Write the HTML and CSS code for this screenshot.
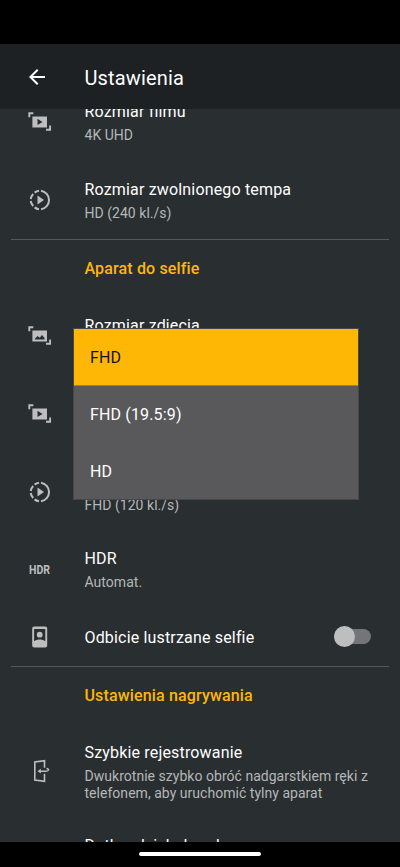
FILE: index.html
```html
<!DOCTYPE html>
<html lang="pl">
<head>
<meta charset="utf-8">
<title>Ustawienia</title>
<link rel="stylesheet" href="styles.css">
</head>
<body>
<svg class="symbols" aria-hidden="true">
  <symbol id="film" viewBox="0 0 24 24"><path d="M1.300 6.200V2.300H5.300M18 18.700h4.100v-4.200" fill="none" stroke="currentColor" stroke-width="1.900"/><path fill-rule="evenodd" d="M4.400 5.500H19V16.400H4.400zM9.500 7.800v6.300l5-3.150z"/></symbol>
  <symbol id="photo" viewBox="0 0 24 24"><path d="M1.300 6.200V2.300H5.300M18 18.700h4.100v-4.200" fill="none" stroke="currentColor" stroke-width="1.900"/><path fill-rule="evenodd" d="M4.400 5.500H19V16.400H4.400zM7 14.500h9.500v-1.500L14 10l-2.300 2.700L9.700 11 7 13.500z"/></symbol>
  <symbol id="slow" viewBox="0 0 24 24"><path d="M13 2.700a9.400 9.400 0 0 1 0 18.600M11 2.700a9.300 9.300 0 0 0-4.400 1.900M5.200 6A9.400 9.400 0 0 0 2.700 11M2.700 13a9.400 9.400 0 0 0 2.500 5M6.600 19.400a9.300 9.300 0 0 0 4.400 1.900" fill="none" stroke="currentColor" stroke-width="2"/><path d="M9.500 7.500v9l6.500-4.500z"/></symbol>
</svg>
<div class="screen">
  <div class="status"></div>
  <header class="bar">
    <svg class="back" viewBox="0 0 24 24"><path d="M20 11H7.830l5.590-5.590L12 4l-8 8 8 8 1.410-1.410L7.830 13H20z"/></svg>
    <h1>Ustawienia</h1>
  </header>
  <main class="list">
    <section class="row film"><svg class="icon"><use href="#film"/></svg><div class="text"><h3>Rozmiar filmu</h3><p>4K UHD</p></div></section>
    <section class="row slow"><svg class="icon"><use href="#slow"/></svg><div class="text"><h3>Rozmiar zwolnionego tempa</h3><p>HD (240 kl./s)</p></div></section>
    <h2>Aparat do selfie</h2>
    <section class="row photo"><svg class="icon"><use href="#photo"/></svg><div class="text"><h3>Rozmiar zdjęcia</h3></div></section>
    <section class="row film-front"><svg class="icon"><use href="#film"/></svg></section>
    <section class="row slow-front"><svg class="icon"><use href="#slow"/></svg><div class="text"><p>FHD (120 kl./s)</p></div></section>
    <section class="row hdr"><span class="icon hdr-icon">HDR</span><div class="text"><h3>HDR</h3><p>Automat.</p></div></section>
    <section class="row mirror"><svg class="icon" viewBox="0 0 24 24"><path fill-rule="evenodd" d="M6.200 1.500h11a2 2 0 0 1 2 2v17a2 2 0 0 1-2 2h-11a2 2 0 0 1-2-2v-17a2 2 0 0 1 2-2zM6.100 4v12.300c3-2.500 8.200-2.500 11.200 0V4z"/><circle cx="11.700" cy="9.700" r="2.900"/></svg><div class="text"><h3>Odbicie lustrzane selfie</h3></div><div class="switch"><span></span></div></section>
    <h2>Ustawienia nagrywania</h2>
    <section class="row quick"><svg class="icon" viewBox="0 0 24 24"><g fill="none" stroke="currentColor" stroke-width="1.600"><path d="M16.500 8.700V1.700L6.800 3v18l9.700 1.300V14.800"/><path d="M11 12.200h6.500c4 0 3.800-2.300 1-2.700" stroke-width="1.400"/></g><path d="M9.500 12.200l3.300-2.400v4.800z"/></svg><div class="text"><h3>Szybkie rejestrowanie</h3><p>Dwukrotnie szybko obróć nadgarstkiem ręki z telefonem, aby uruchomić tylny aparat</p></div></section>
    <section class="row touch"><div class="text"><h3>Dotk. gdziekol. wyk.</h3></div></section>
  </main>
  <footer class="nav"><span></span></footer>
  <div class="menu"><div class="selected">FHD</div><div>FHD (19.5:9)</div><div>HD</div></div>
</div>
</body>
</html>
```
FILE: styles.css
```css
* { box-sizing: border-box; }
body { margin: 0; background: #000; font-family: Roboto, sans-serif; }
h1, h2, h3, p { margin: 0; font-weight: 400; }
.symbols { display: none; }
.screen { position: relative; width: 400px; height: 867px; overflow: hidden; display: flex; flex-direction: column; background: #292e30; }
.status { height: 44px; background: #000; flex: none; }
.bar { height: 65px; flex: none; background: #1d2123; display: flex; align-items: center; padding: 3px 0 0 25px; color: #fff; }
.back { width: 24px; height: 24px; fill: currentColor; margin-right: 35.5px; margin-top: -3px; }
h1 { font-size: 20px; line-height: 24px; letter-spacing: .15px; }
.list { height: 733px; flex: none; overflow: hidden; }
.row { display: flex; height: 78px; padding: 0 28px; }
.icon { flex: none; width: 24px; height: 24px; margin: 27px 32.5px 0 0; color: #bdbebe; fill: currentColor; }
.text { flex: 1; padding-top: 16px; }
h3 { color: #fff; font-size: 16px; line-height: 20px; letter-spacing: .17px; white-space: nowrap; }
p { color: #b5b7b8; font-size: 14px; line-height: 17px; letter-spacing: .03px; margin-top: 5px; }
h2 { color: #ffb706; font-size: 16px; line-height: 20px; font-weight: 500; letter-spacing: .15px; height: 59px; padding: 19px 0 0 73.5px; border-top: 1px solid #55595b; margin: 0 11px; }
.film { height: 78px; margin-top: -23px; }
.film .icon { margin-top: 25px; }
.slow { height: 75px; }
.slow .icon { margin-top: 24px; }
.photo .text { padding-top: 18px; }
.slow-front .icon { margin-top: 26px; }
.slow-front .text { padding-top: 38px; }
.hdr { height: 75px; }
.hdr .text { padding-top: 17px; }
.hdr .hdr-icon { font-size: 12.5px; font-weight: 700; line-height: 24px; margin-top: 26px; transform: translateX(1px) scaleX(.84); transform-origin: left; }
.mirror { height: 59px; }
.mirror .icon { margin-top: 18px; }
.mirror .text { padding-top: 21px; }
.switch { width: 37px; height: 15px; border-radius: 8px; background: #727678; margin: 22px 1px 0 0; }
.switch span { display: block; width: 21px; height: 21px; border-radius: 50%; background: #bdbebe; margin-top: -3px; }
.quick { height: 93px; }
.quick .icon { margin-top: 34px; }
.quick .text { padding-top: 18px; }
.touch { padding-left: 84.5px; }
.touch .text { padding-top: 18px; }
.nav { height: 25px; background: #000; display: flex; justify-content: center; padding-top: 10px; }
.nav span { width: 122px; height: 4px; border-radius: 2px; background: #fff; }
.menu { position: absolute; left: 73px; top: 328px; width: 286px; height: 172px; background: #59595b; border: 1px solid #454849; color: #fff; font-size: 16px; letter-spacing: .15px; }
.menu div { height: 57px; line-height: 58px; padding-left: 16px; }
.menu .selected { background: #ffb706; color: #111; border-bottom: 1px solid #a08138; }
```
